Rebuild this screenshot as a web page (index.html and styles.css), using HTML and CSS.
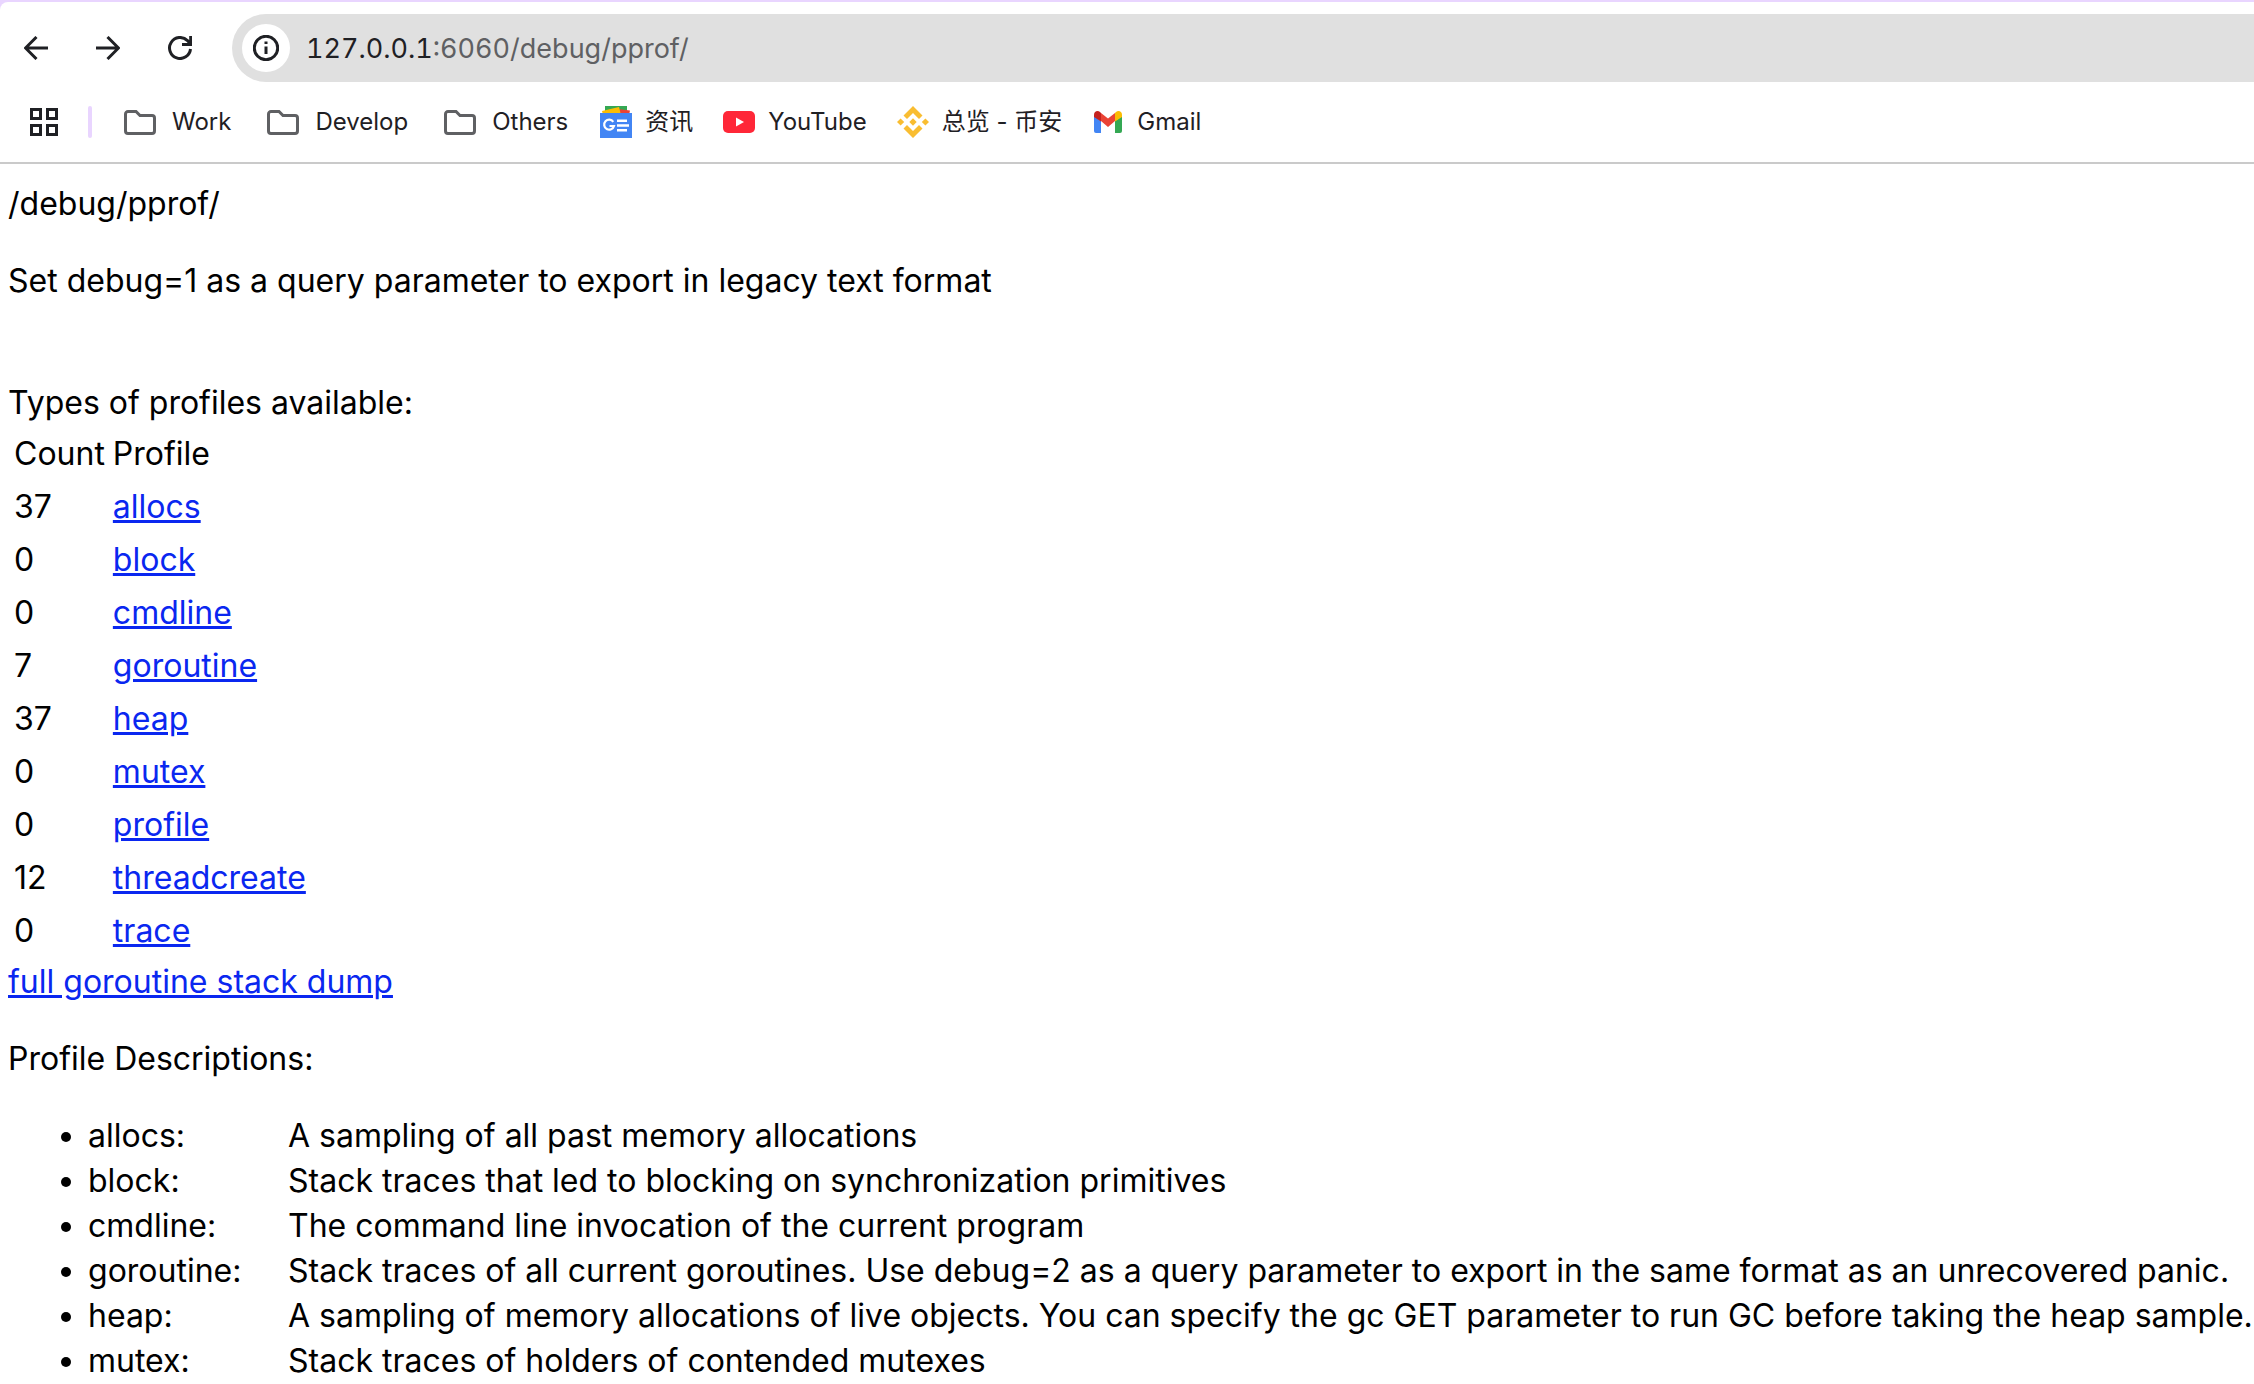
FILE: index.html
```html
<!DOCTYPE html>
<html lang="en">
<head>
<meta charset="utf-8">
<title>/debug/pprof/</title>
<link rel="stylesheet" href="styles.css">
</head>
<body>
<header class="browser">
  <div class="toolbar">
    <nav class="nav" aria-label="History">
      <button class="nav-button" aria-label="Back"><svg viewBox="0 0 24 24"><path d="M24 12H2M12.500 1L1.500 12l11 11"/></svg></button>
      <button class="nav-button" aria-label="Forward"><svg viewBox="0 0 24 24"><path d="M0 12h22M11.500 1l11 11l-11 11"/></svg></button>
      <button class="nav-button" aria-label="Reload"><svg viewBox="0 0 24 24"><path d="M22.500 13A10.500 10.500 0 1 1 19.500 4.600L22 7.500M22.700 0v8.500H14"/></svg></button>
    </nav>
    <div class="omnibox">
      <button class="site-info" aria-label="Site information"><svg viewBox="0 0 26 26"><circle cx="13" cy="13" r="11.700"/><path d="M13 11.500v7.500M13 6.500v2.600"/></svg></button>
      <a class="url" href="#"><span class="host">127.0.0.1</span>:6060/debug/pprof/</a>
    </div>
  </div>
  <nav class="bookmarks" aria-label="Bookmarks">
    <button class="apps" aria-label="Apps"><svg viewBox="0 0 28 28"><path d="M1.500 1.500h9v9h-9zM17.500 1.500h9v9h-9zM1.500 17.500h9v9h-9zM17.500 17.500h9v9h-9z"/></svg></button>
    <span class="divider"></span>
    <button class="bookmark bookmark-folder"><svg class="folder" viewBox="0 0 36 32"><path d="M8 5.500h8l4 4h12a2.500 2.500 0 0 1 2.500 2.500v13a2.500 2.500 0 0 1-2.500 2.500H8A2.500 2.500 0 0 1 5.500 25V8A2.500 2.500 0 0 1 8 5.500z"/></svg>Work</button>
    <button class="bookmark bookmark-folder"><svg class="folder" viewBox="0 0 36 32"><path d="M8 5.500h8l4 4h12a2.500 2.500 0 0 1 2.500 2.500v13a2.500 2.500 0 0 1-2.500 2.500H8A2.500 2.500 0 0 1 5.500 25V8A2.500 2.500 0 0 1 8 5.500z"/></svg>Develop</button>
    <button class="bookmark bookmark-folder"><svg class="folder" viewBox="0 0 36 32"><path d="M8 5.500h8l4 4h12a2.500 2.500 0 0 1 2.500 2.500v13a2.500 2.500 0 0 1-2.500 2.500H8A2.500 2.500 0 0 1 5.500 25V8A2.500 2.500 0 0 1 8 5.500z"/></svg>Others</button>
    <a class="bookmark" href="#"><svg class="favicon" viewBox="0 0 32 32"><path fill="#34a853" d="M5 0h22v8H5z"/><path fill="#ea4335" d="M18 3l12 1.500L29 9H17z"/><path fill="#fbbc04" d="M2 5l17-4 2 8H3z"/><path fill="#4285f4" d="M0 7h32v25H0z"/><path fill="none" stroke="#fff" stroke-width="2.200" d="M13.300 15.800a5 5 0 1 0 .7 4.200H9.500"/><path fill="#fff" d="M17 13.500h10V16H17zM17 18.300h12v2.500H17zM17 23h10v2.500H17z"/></svg>资讯</a>
    <a class="bookmark" href="#"><svg class="favicon" viewBox="0 0 32 32"><rect y="5" width="32" height="22" rx="5" fill="#ff2738"/><path fill="#fff" d="M13 11.500l8 4.500-8 4.500z"/></svg>YouTube</a>
    <a class="bookmark" href="#"><svg class="favicon" viewBox="0 0 32 32"><path fill="#f9bd31" d="M16 0l9.500 9.500L22 13l-6-6-6 6-3.500-3.500zM16 32l9.500-9.500L22 19l-6 6-6-6-3.500 3.500zM16 12.300l3.700 3.700-3.700 3.700-3.700-3.700zM3.600 12.400L7.200 16l-3.600 3.600L0 16zM28.400 12.400L32 16l-3.600 3.600-3.600-3.600z"/></svg>总览 - 币安</a>
    <a class="bookmark" href="#"><svg class="favicon" viewBox="0 0 32 32"><path fill="#4285f4" d="M2 10l7 5v12H4a2 2 0 0 1-2-2z"/><path fill="#34a853" d="M30 10l-7 5v12h5a2 2 0 0 0 2-2z"/><path fill="#ea4335" d="M9 7l7 5.500L23 7v8l-7 6-7-6z"/><path fill="#c5221f" d="M2 11V8.500C2 5 6 4 8 6l1 1v8.500z"/><path fill="#fbbc04" d="M30 11V8.500C30 5 26 4 24 6l-1 1v8.500z"/></svg>Gmail</a>
  </nav>
</header>
<main class="page">
  <div>/debug/pprof/</div>
  <p>Set debug=1 as a query parameter to export in legacy text format</p>
  <br>
  <div>Types of profiles available:</div>
  <table class="profiles">
    <thead><tr><th>Count</th><th>Profile</th></tr></thead>
    <tbody>
      <tr><td>37</td><td><a href="#">allocs</a></td></tr>
      <tr><td>0</td><td><a href="#">block</a></td></tr>
      <tr><td>0</td><td><a href="#">cmdline</a></td></tr>
      <tr><td>7</td><td><a href="#">goroutine</a></td></tr>
      <tr><td>37</td><td><a href="#">heap</a></td></tr>
      <tr><td>0</td><td><a href="#">mutex</a></td></tr>
      <tr><td>0</td><td><a href="#">profile</a></td></tr>
      <tr><td>12</td><td><a href="#">threadcreate</a></td></tr>
      <tr><td>0</td><td><a href="#">trace</a></td></tr>
    </tbody>
  </table>
  <a href="#">full goroutine stack dump</a>
  <p>Profile Descriptions:</p>
  <ul class="descriptions">
    <li><span class="name">allocs:</span>A sampling of all past memory allocations</li>
    <li><span class="name">block:</span>Stack traces that led to blocking on synchronization primitives</li>
    <li><span class="name">cmdline:</span>The command line invocation of the current program</li>
    <li><span class="name">goroutine:</span>Stack traces of all current goroutines. Use debug=2 as a query parameter to export in the same format as an unrecovered panic.</li>
    <li><span class="name">heap:</span>A sampling of memory allocations of live objects. You can specify the gc GET parameter to run GC before taking the heap sample.</li>
    <li><span class="name">mutex:</span>Stack traces of holders of contended mutexes</li>
  </ul>
</main>
</body>
</html>
```
FILE: styles.css
```css
* {
  box-sizing: border-box;
}

body {
  margin: 0;
  background: #fff;
  color: #000;
  font-family: Inter, "Noto Sans CJK SC", sans-serif;
}

button {
  padding: 0;
  border: 0;
  background: none;
  color: inherit;
  font: inherit;
}

svg {
  display: block;
  flex: none;
}

.browser {
  background: #e9d5ff;
  padding-top: 2px;
  border-bottom: 2px solid #cacaca;
  color: #1f2024;
}

.toolbar {
  display: flex;
  gap: 40px;
  padding: 12px 0 0 24px;
  background: #fff;
  border-top-left-radius: 8px;
}

.nav {
  display: flex;
  align-items: center;
  gap: 48px;
}

.nav-button svg {
  width: 24px;
  height: 24px;
  fill: none;
  stroke: #1f2024;
  stroke-width: 3;
}

.omnibox {
  display: flex;
  flex: 1;
  align-items: center;
  gap: 16px;
  height: 68px;
  padding-left: 10px;
  background: #e0e0e0;
  border-radius: 34px 0 0 34px;
}

.site-info {
  display: grid;
  place-items: center;
  width: 48px;
  height: 48px;
  border-radius: 50%;
  background: #fff;
}

.site-info svg {
  width: 26px;
  height: 26px;
  fill: none;
  stroke: #1f2024;
  stroke-width: 3;
}

.url {
  color: #5f6063;
  font-size: 27px;
  font-variant-numeric: tabular-nums;
  text-decoration: none;
}

.host {
  color: #1f2024;
}

.bookmarks {
  display: flex;
  align-items: center;
  height: 80px;
  padding-left: 30px;
  background: #fff;
  font-size: 24px;
  line-height: 28px;
}

.apps svg {
  width: 28px;
  height: 28px;
  fill: none;
  stroke: #1f2024;
  stroke-width: 3;
}

.divider {
  width: 4px;
  height: 32px;
  margin: 0 28px 0 30px;
  border-radius: 2px;
  background: #e9d5ff;
}

.bookmark {
  display: flex;
  align-items: center;
  gap: 13px;
  margin-right: 30px;
  color: inherit;
  text-decoration: none;
  white-space: nowrap;
}

.bookmark-folder {
  gap: 16px;
  margin-right: 32px;
}

.folder {
  width: 36px;
  height: 32px;
  fill: none;
  stroke: #5f6063;
  stroke-width: 3;
}

.favicon {
  width: 32px;
  height: 32px;
}

.page {
  padding: 17px 0 0 8px;
  font-size: 32px;
  line-height: 45px;
}

.page a {
  color: #0a27f0;
}

.page p {
  margin: 32px 0;
}

.profiles {
  border-spacing: 4px;
}

.profiles th,
.profiles td {
  padding: 2px;
  font-weight: 400;
  text-align: left;
}

.descriptions {
  margin: 32px 0 0;
  padding-left: 80px;
  white-space: nowrap;
}

.name {
  display: inline-block;
  width: 200px;
}
```
